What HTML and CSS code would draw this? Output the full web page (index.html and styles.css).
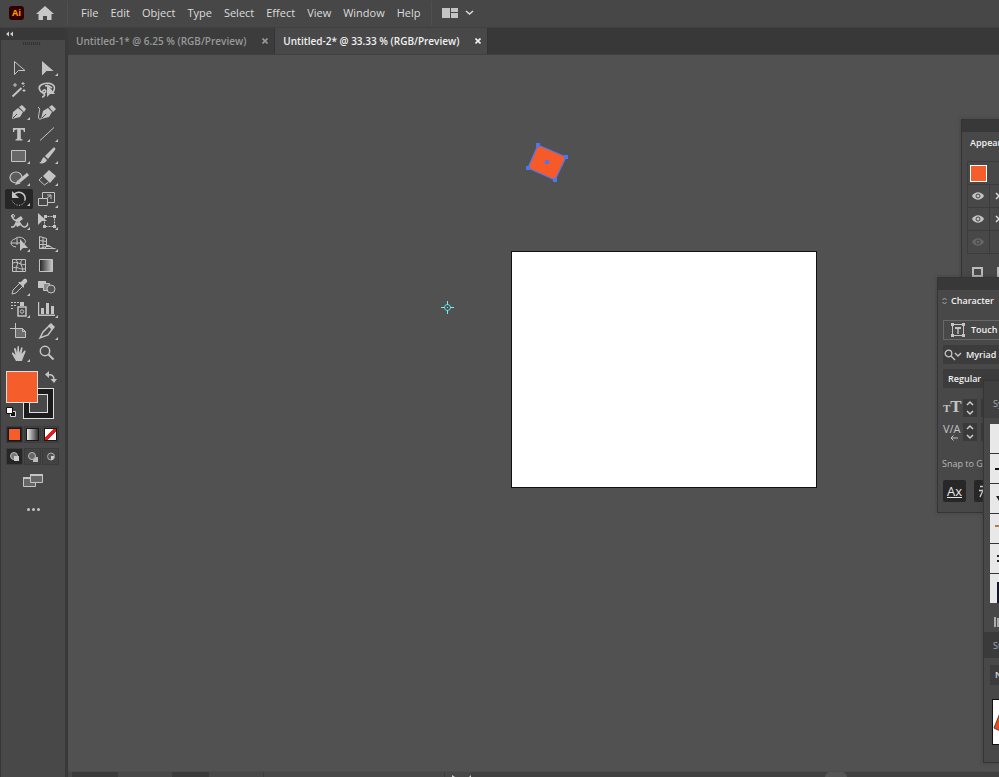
FILE: index.html
```html
<!DOCTYPE html>
<html lang="en">
<head>
<meta charset="utf-8">
<title>Untitled-2</title>
<link rel="stylesheet" href="styles.css">
</head>
<body>
<header class="menubar">
  <span class="logo">Ai</span>
  <button class="home" aria-label="Home"><svg width="18" height="16" viewBox="0 0 18 16"><path fill="#c8c8c8" d="M9 1 18 9h-2.500v6h-4.500v-4h-4v4H2.500V9H0z"/></svg></button>
  <nav class="menus">
    <button>File</button><button>Edit</button><button>Object</button><button>Type</button><button>Select</button><button>Effect</button><button>View</button><button>Window</button><button>Help</button>
  </nav>
  <button class="arrange" aria-label="Arrange documents"><svg width="32" height="12" viewBox="0 0 32 12"><path fill="#c4c4c4" d="M0 1h8v10H0zM9 1h7v4H9zM9 6h7v5H9z"/><path d="m24 4 3.500 3L31 4" fill="none" stroke="#ddd" stroke-width="1.500"/></svg></button>
</header>
<div class="body">
  <aside class="toolbar">
    <button class="collapse" aria-label="Collapse toolbar"><svg width="8" height="6" viewBox="0 0 8 6"><path fill="#ccc" d="M3 .5v5L0 3zM7 .5v5L4 3z"/></svg></button>
    <div class="grip"></div>
    <div class="tools">
      <button aria-label="Selection"><svg viewBox="0 0 28 22"><path class="l" d="M9.500 4.500v13l4-4h6.500z"/></svg></button>
      <button class="more" aria-label="Direct selection"><svg viewBox="0 0 28 22"><path class="f" d="M9 4v14.500l4.500-4.500h7z"/></svg></button>
      <button aria-label="Magic wand"><svg viewBox="0 0 28 22"><path class="l w" d="m7.500 17.500 9-8.500"/><path class="l" d="M18 8l1.500-1.500M10 4v4M8 6h4M18 3v3M16.500 4.500h3M19 10v3M17.500 11.500h3"/></svg></button>
      <button aria-label="Lasso"><svg viewBox="0 0 28 22"><path class="l" stroke-width="1.600" d="M10 14C6 12 5 8 8 6c4-3 11-2 13 1 1 2 0 5-1 6M10 14c4 0 3-4 1-3s-2 3 0 4-1 3-2 3M12 7c3-1 5 0 7 2"/><path class="f" d="M14 5v13l3-3h5z"/></svg></button>
      <button class="more" aria-label="Pen"><svg viewBox="0 0 28 22"><path class="f" d="m7 18 1-7 5-4 5 4-3 5zM14 6l3-2 4 4-2 3z"/><path class="d" d="m8 17 4-4"/></svg></button>
      <button aria-label="Curvature"><svg viewBox="0 0 28 22"><path class="f" d="m8 18 2-8 5-3 4 4-3 5zM16 6l3-2 4 4-3 3z"/><path class="d" d="m9 17 4-4"/><path class="l" d="M8 18c-4 1-2-4-2-6 1-3 1-5-1-6"/></svg></button>
      <button class="more" aria-label="Type"><svg viewBox="0 0 28 22"><path class="f" d="M8 5h12v4h-1.200c0-1.800-.5-2.500-3-2.500v8.500c0 1 .5 1.200 1.700 1.300V17.500h-7v-1.200c1.200-.1 1.700-.3 1.700-1.300V6.500c-2.500 0-3 .7-3 2.500H8z"/></svg></button>
      <button class="more" aria-label="Line segment"><svg viewBox="0 0 28 22"><path class="l" d="M7 17.500 21 4.500"/></svg></button>
      <button class="more" aria-label="Rectangle"><svg viewBox="0 0 28 22"><path d="M6.500 5.500h14v11h-14z" fill="#686868" stroke="#c4c4c4"/></svg></button>
      <button class="more" aria-label="Paintbrush"><svg viewBox="0 0 28 22"><path class="f" d="m12 11 8-8c2-1 3 0 2 2l-7 9zM11 12l3 3c-1 3-5 4-8 3 3-1 2-4 5-6z"/></svg></button>
      <button class="more" aria-label="Shaper"><svg viewBox="0 0 28 22"><ellipse cx="11" cy="10.500" rx="6" ry="5.500" fill="#5c5c5c" stroke="#c4c4c4" stroke-width="1.200"/><path class="l" stroke-width="3" d="m14 14.500 9-7.500"/><path class="f" d="m10 18 2.500-5 3 3.500z"/></svg></button>
      <button class="more" aria-label="Eraser"><svg viewBox="0 0 28 22"><path class="f" d="m10 9 6-6 7 6-6 7z"/><path class="l" d="m9 10-3 3 5.500 5 4-3"/></svg></button>
      <button class="more selected" aria-label="Rotate"><svg viewBox="0 0 28 22"><path class="l" stroke-width="1.500" d="M9 6c6-4 12 0 11 6"/><path class="f" d="M7 3v7h7z"/><path class="l" stroke-dasharray="1 1.500" d="M20 12c-1 7-11 7-13 0"/></svg></button>
      <button class="more" aria-label="Scale"><svg viewBox="0 0 28 22"><path class="l" d="M9.500 10V3.500h12v10H15M5.500 9.500h9v7h-9zM13 10l5-4m-4 0h4v4"/></svg></button>
      <button class="more" aria-label="Width"><svg viewBox="0 0 28 22"><path class="l" stroke-width="1.500" d="M6 16c5 1 4-4 6-6s4 7 8 6 2-4 3-4M7 4c0 3 1 5 5 6"/><circle class="l" cx="8" cy="5" r="1.500"/><path class="f" d="m10 9 6-4 2 3-4 3zM10 12l4-1 2 3-4 2z"/></svg></button>
      <button class="more" aria-label="Free transform"><svg viewBox="0 0 28 22"><path class="f" d="M5 2v12l4-4h5zM11 4h3v3h-3zM20 4h3v3h-3zM10 14h3v3h-3zM20 14h3v3h-3z"/><path class="l" stroke-dasharray="2 1" d="M11.500 5.500h10v10h-10z"/></svg></button>
      <button class="more" aria-label="Shape builder"><svg viewBox="0 0 28 22"><path class="l" d="M11 14c-7-1-6-7-1-8 2-3 8-2 10 1 1 2 0 3-1 4M12 5v7M6 10h10"/><path class="f" d="M15 6v12l3-3h5z"/></svg></button>
      <button class="more" aria-label="Perspective grid"><svg viewBox="0 0 28 22"><path class="l" d="M6.500 3.500v12h16M6.500 3.500l7 2v8l-7 2M10 5v10M6 7.500l8 1M6 11.500h8M14 13.500h4M11 16l4-4 6 4"/></svg></button>
      <button aria-label="Mesh"><svg viewBox="0 0 28 22"><path class="l" d="M7.500 4.500h13v12h-13zM7 9c5-5 9 3 14 0M7 14c4-5 9 3 14-1M11 5c4 4-2 8 1 12M17 5c-4 4 3 8 0 12"/></svg></button>
      <button aria-label="Gradient"><svg viewBox="0 0 28 22"><defs><linearGradient id="g"><stop stop-color="#222"/><stop offset="1" stop-color="#ccc"/></linearGradient></defs><path d="M6.500 4.500h13v12h-13z" fill="url(#g)" stroke="#c4c4c4"/></svg></button>
      <button class="more" aria-label="Eyedropper"><svg viewBox="0 0 28 22"><path class="l" d="m7 17 1-4 7-7 3 3-7 7z"/><path class="f" d="m13 5 3 0 3-3c2-1 4 1 3 3l-3 3v3z"/></svg></button>
      <button aria-label="Blend"><svg viewBox="0 0 28 22"><path class="f" d="M5 4h8v7H5z"/><path fill="#898989" stroke="#c4c4c4" d="M10.500 6.500h6v7h-6z"/><circle cx="18" cy="12" r="4" fill="#555" stroke="#c4c4c4"/></svg></button>
      <button class="more" aria-label="Symbol sprayer"><svg viewBox="0 0 28 22"><path class="l" stroke-width="1.500" d="M13 8h8v9h-8z"/><path class="f" d="M15 3h4v4h-4zM6 3h2v1H6zM9 3h2v1H9zM12 3h2v1h-2zM6 6h2v1H6zM9 6h2v1H9zM6 9h2v1H6z"/><circle class="l" cx="17" cy="12.500" r="1.700"/></svg></button>
      <button class="more" aria-label="Column graph"><svg viewBox="0 0 28 22"><path class="f" d="M5 3h1.200v12.500H22V17H5zM8 9h3v6H8zM13 4h3v11h-3zM18 7h3v8h-3z"/></svg></button>
      <button aria-label="Artboard"><svg viewBox="0 0 28 22"><path fill="#6d6d6d" stroke="#c4c4c4" d="M10.500 7.500h7l3 3v6h-10z"/><path class="l" d="M10.500 2v6M5 7.500h6M17.500 7.500v3h3"/></svg></button>
      <button class="more" aria-label="Slice"><svg viewBox="0 0 28 22"><path class="l" stroke-width="1.500" d="m7 17 3-6 7-7 3 3-5 7z"/><path class="f" d="m15 5 3-3 4 4-3 3z"/></svg></button>
      <button class="more" aria-label="Hand"><svg viewBox="0 0 28 22"><path class="f" d="M11 18 7 11c-.5-1.500 1-2 2-.5l1.500 1.500L9 6c0-1.500 1.500-1.500 2 0l1 4 .5-6c0-1.300 1.500-1.300 1.500 0v6l2-5c.5-1.200 2-.7 1.500.8L16.500 11l2.500-3c1-1 2-.3 1.500 1L18 15l-1 3z"/></svg></button>
      <button aria-label="Zoom"><svg viewBox="0 0 28 22"><circle class="l" stroke-width="1.500" cx="12" cy="8" r="4.700"/><path class="l w" d="m15.500 11.500 5 5"/></svg></button>
    </div>
    <div class="paint">
      <button class="stroke" aria-label="Stroke"></button>
      <button class="fill" aria-label="Fill"></button>
      <button class="swap" aria-label="Swap fill and stroke"><svg width="12" height="12" viewBox="0 0 12 12"><path d="M3 4c4-1 6 1 6 5" fill="none" stroke="#c4c4c4" stroke-width="1.500"/><path fill="#c4c4c4" d="M4 0v7L0 3.500zM5.500 8H12l-3 4z"/></svg></button>
      <button class="default" aria-label="Default fill and stroke"><svg width="11" height="11" viewBox="0 0 11 11"><path fill="#111" stroke="#ddd" d="M4.500 4.500h5v5h-5z"/><path fill="#fff" stroke="#111" d="M.5.5h6v6h-6z"/></svg></button>
    </div>
    <div class="strip">
      <button class="on" aria-label="Color"><i class="chip orange"></i></button>
      <button aria-label="Gradient fill"><i class="chip grad"></i></button>
      <button aria-label="None"><i class="chip none"></i></button>
    </div>
    <div class="strip">
      <button class="on" aria-label="Draw normal"><svg width="12" height="12" viewBox="0 0 12 12"><circle cx="5" cy="5" r="3.500" fill="#777" stroke="#bbb"/><path fill="#ccc" d="M5 5h5v5H5z"/></svg></button>
      <button aria-label="Draw behind"><svg width="12" height="12" viewBox="0 0 12 12"><path fill="#bbb" d="M6 6h5v5H6z"/><circle cx="5" cy="5" r="3.500" fill="#666" stroke="#bbb"/></svg></button>
      <button aria-label="Draw inside"><svg width="12" height="12" viewBox="0 0 12 12"><circle cx="6" cy="5.500" r="3.500" fill="#555" stroke="#aaa"/><path fill="#ccc" d="M6 5h3v2L7 9H6z"/></svg></button>
    </div>
    <button class="screen" aria-label="Screen mode"><svg width="20" height="15" viewBox="0 0 20 15"><path fill="#666" stroke="#c4c4c4" d="M.5 4.500h12v9H.5z"/><path stroke="#c4c4c4" stroke-width="2" d="M0 5h13"/><path fill="#666" stroke="#c4c4c4" d="M7.500 1.500h12v8h-12z"/><path stroke="#c4c4c4" stroke-width="2" d="M7 2h13"/></svg></button>
    <button class="dots" aria-label="Edit toolbar"><i></i><i></i><i></i></button>
  </aside>
  <main class="workspace">
    <div class="tabs">
      <div class="tab"><span>Untitled-1* @ 6.25 % (RGB/Preview)</span><button aria-label="Close Untitled-1"><svg width="6" height="6" viewBox="0 0 6 6"><path d="m.5.5 5 5m0-5-5 5" stroke="currentColor" stroke-width="1.600"/></svg></button></div>
      <div class="tab active"><span>Untitled-2* @ 33.33 % (RGB/Preview)</span><button aria-label="Close Untitled-2"><svg width="6" height="6" viewBox="0 0 6 6"><path d="m.5.5 5 5m0-5-5 5" stroke="currentColor" stroke-width="1.600"/></svg></button></div>
    </div>
    <div class="canvas">
      <div class="artboard"></div>
      <svg class="shape" width="44" height="42" viewBox="0 0 44 42"><path d="M12 3 40 15 29 38 2 26z" fill="#f55a28" stroke="#5577e8" stroke-width="1.300"/><path fill="#4d76f2" d="M10 1h4v4h-4zM38 13h4v4h-4zM27 36h4v4h-4zM0 24h4v4H0zM19 18h4v4h-4z"/></svg>
      <svg class="origin" width="13" height="13" viewBox="0 0 13 13"><circle cx="6.500" cy="6.500" r="3" fill="none" stroke="#5fdce0"/><path d="M6.500 0v4M6.500 9v4M0 6.500h4M9 6.500h4M6 6.500h1" stroke="#6ff0f2"/></svg>
    </div>
    <footer class="status">
      <span class="field zoom"></span><span class="gap"></span><span class="field nav"></span><span class="gap"></span>
      <span class="mode"></span>
      <svg width="26" height="5" viewBox="0 0 26 5"><path d="M7 3v2h3zM26 3l-2 2h2z" fill="#ccc"/></svg>
      <span class="track"><i class="thumb"></i></span>
    </footer>
  </main>
</div>

<section class="panel appearance">
  <div class="bar"></div>
  <h2>Appearance</h2>
  <div class="attr target"><i></i></div>
  <div class="attr"><svg width="12" height="8" viewBox="0 0 12 8"><path fill="#c4c4c4" d="M0 4c3-5 9-5 12 0-3 5-9 5-12 0z"/><circle cx="6" cy="4" r="2" fill="none" stroke="#444"/></svg><b><svg width="5" height="8" viewBox="0 0 5 8"><path d="m1 1 3 3-3 3" fill="none" stroke="#ddd" stroke-width="1.500"/></svg></b></div>
  <div class="attr"><svg width="12" height="8" viewBox="0 0 12 8"><path fill="#c4c4c4" d="M0 4c3-5 9-5 12 0-3 5-9 5-12 0z"/><circle cx="6" cy="4" r="2" fill="none" stroke="#444"/></svg><b><svg width="5" height="8" viewBox="0 0 5 8"><path d="m1 1 3 3-3 3" fill="none" stroke="#ddd" stroke-width="1.500"/></svg></b></div>
  <div class="attr"><svg width="12" height="8" viewBox="0 0 12 8"><path fill="#666" d="M0 4c3-5 9-5 12 0-3 5-9 5-12 0z"/><circle cx="6" cy="4" r="2" fill="none" stroke="#444"/></svg><b></b></div>
  <div class="actions"><i></i><i></i></div>
</section>

<section class="panel character">
  <div class="bar"></div>
  <h2><svg width="5" height="8" viewBox="0 0 5 8"><path d="m.5 3 2-2 2 2m0 2-2 2-2-2" fill="none" stroke="#aaa"/></svg>Character</h2>
  <div class="rows">
    <button class="touch"><svg width="16" height="16" viewBox="0 0 16 16"><path d="M2.500 2.500h11v11h-11z" fill="none" stroke="#c4c4c4"/><path fill="#c4c4c4" d="M1 1h3v3H1zM12 1h3v3h-3zM1 12h3v3H1zM12 12h3v3h-3zM5 5h6v2H8.700v5H7.300V7H5z"/></svg>Touch Type Tool</button>
    <button class="family"><svg width="18" height="12" viewBox="0 0 18 12"><circle cx="4.500" cy="4.500" r="3.300" fill="none" stroke="#c4c4c4" stroke-width="1.300"/><path d="m7 7 4 4M11 4l3 3 3-3" fill="none" stroke="#c4c4c4" stroke-width="1.400"/></svg>Myriad Pro</button>
    <button class="style">Regular</button>
    <div class="num"><span class="glyph serif"><small>T</small>T</span><button class="step" aria-label="Font size"><svg width="8" height="16" viewBox="0 0 8 16"><path d="m1 5 3-3 3 3M1 11l3 3 3-3" fill="none" stroke="#ccc" stroke-width="1.500"/></svg></button><span class="value"></span></div>
    <div class="num"><span class="glyph kern"><span>V/A</span><svg width="8" height="6" viewBox="0 0 8 6"><path d="M8 3H1m2.500-2.500L1 3l2.500 2.500" fill="none" stroke="#c4c4c4"/></svg></span><button class="step" aria-label="Kerning"><svg width="8" height="16" viewBox="0 0 8 16"><path d="m1 5 3-3 3 3M1 11l3 3 3-3" fill="none" stroke="#ccc" stroke-width="1.500"/></svg></button><span class="value"></span></div>
  </div>
  <p>Snap to Glyph</p>
  <div class="snaps"><button><u>Ax</u></button><button aria-label="Snap to x-height"><svg width="16" height="14" viewBox="0 0 16 14"><path d="M2 2.500h14M1 6.500h15M2 13 7 2" fill="none" stroke="#ddd" stroke-width="1.300"/></svg></button></div>
</section>

<section class="panel library">
  <div class="head">Symbols</div>
  <div class="brushes">
    <div></div>
    <div><svg width="9" height="29" viewBox="0 0 9 29"><path d="M5 15h4" stroke="#111" stroke-width="2"/></svg></div>
    <div><svg width="9" height="29" viewBox="0 0 9 29"><path d="M6 12l3 5v-5z" fill="#222"/></svg></div>
    <div><svg width="9" height="29" viewBox="0 0 9 29"><path d="M5 12h4" stroke="#b97b43" stroke-width="2"/></svg></div>
    <div><svg width="9" height="29" viewBox="0 0 9 29"><path d="M7 11h2v2H7zM7 16h2v2H7z" fill="#222"/></svg></div>
    <div><svg width="9" height="29" viewBox="0 0 9 29"><path d="M7 8h2v21H7z" fill="#15172e"/></svg></div>
  </div>
  <div class="books"><svg width="5" height="10" viewBox="0 0 5 10"><path d="M1 0v10M4 1v9" stroke="#ccc" stroke-width="1.500"/></svg></div>
  <div class="head second">Styles</div>
  <button class="normal">Normal</button>
  <div class="preview"><svg width="30" height="42" viewBox="0 0 30 42"><path d="M1 28 9 8 28 16v14H5z" fill="#e94e1f" stroke="#5b4036"/></svg></div>
</section>
</body>
</html>
```

FILE: styles.css
```css
* { box-sizing: border-box; }
body {
  margin: 0;
  height: 100vh;
  display: flex;
  flex-direction: column;
  position: relative;
  overflow: hidden;
  background: #515151;
  color: #dcdcdc;
  font: 11px/16px "Open Sans", "Noto Sans", sans-serif;
}
button {
  margin: 0;
  padding: 0;
  border: 0;
  background: none;
  color: inherit;
  font: inherit;
  white-space: nowrap;
  display: flex;
  align-items: center;
  justify-content: center;
}
svg { display: block; flex: none; }

.menubar {
  flex: none;
  height: 28px;
  display: flex;
  align-items: center;
  padding-bottom: 1px;
  background: #474747;
  border-bottom: 1px solid #404040;
}
.logo {
  width: 15px;
  height: 14px;
  margin-left: 9px;
  border-radius: 3px;
  background: #330000;
  color: #ff9a00;
  font-size: 9px;
  line-height: 13px;
  font-weight: 700;
  text-align: center;
}
.home { margin-left: 12px; }
.menus {
  display: flex;
  gap: 12px;
  height: 24px;
  margin-left: 13px;
  padding: 0 10px 0 13px;
  border-left: 1px solid #505050;
  border-right: 1px solid #505050;
}
.arrange { margin-left: 10px; }

.body { flex: 1; display: flex; min-height: 0; }
.toolbar {
  width: 68px;
  flex: none;
  display: flex;
  flex-direction: column;
  background: #484848;
  border-left: 1px solid #353535;
  border-right: 3px solid #393939;
}
.collapse {
  height: 12px;
  padding-left: 5px;
  justify-content: flex-start;
  background: #383838;
}
.grip {
  width: 18px;
  height: 3px;
  margin: 2px 0 12px 22px;
  background: repeating-linear-gradient(90deg, #333 0 1px, #454545 1px 2px);
}
.tools {
  display: grid;
  grid-template-columns: 28px 28px;
  grid-auto-rows: 22px;
  padding-left: 4px;
}
.tools button { position: relative; border-radius: 2px; }
.tools svg { width: 28px; height: 22px; }
.tools .selected { background: #262626; height: 20px; }
.more::after {
  content: "";
  position: absolute;
  right: 3px;
  bottom: 3px;
  border-left: 3px solid transparent;
  border-bottom: 3px solid #c4c4c4;
}
.l { fill: none; stroke: #c4c4c4; }
.w { stroke-width: 2; }
.f { fill: #c4c4c4; }
.d { stroke: #484848; fill: none; }

.paint { position: relative; height: 50px; margin: 6px 6px 0 5px; }
.paint button { position: absolute; }
.fill {
  left: 0;
  top: 0;
  width: 32px;
  height: 32px;
  background: #f55e2b;
  border: 1px solid #ddd;
}
.stroke {
  left: 17px;
  top: 17px;
  width: 31px;
  height: 31px;
  border: 1px solid #ddd;
  background: #1c1c1c;
}
.stroke::after {
  content: "";
  width: 17px;
  height: 17px;
  border: 1px solid #ddd;
  background: #484848;
}
.swap { right: 2px; top: 0; }
.default { left: 0; top: 36px; }
.strip { display: flex; gap: 1px; margin: 5px 0 0 5px; }
.strip button {
  width: 17px;
  height: 17px;
  background: #424242;
  border: 1px solid #3b3b3b;
}
.strip .on { background: #262626; }
.chip { width: 13px; height: 13px; border: 1px solid #181818; }
.orange { background: #f55e2b; }
.grad { background: linear-gradient(90deg, #eee, #333); }
.none { background: linear-gradient(-45deg, #fff 40%, #e21b1b 40% 60%, #fff 60%); background: linear-gradient(135deg, #fff 40%, #e21b1b 40% 60%, #fff 60%); }
.screen { margin-top: 8px; }
.dots { gap: 2px; margin-top: 20px; }
.dots i { width: 3px; height: 3px; border-radius: 50%; background: #c4c4c4; }

.workspace { flex: 1; min-width: 0; display: flex; flex-direction: column; }
.tabs {
  flex: none;
  height: 27px;
  display: flex;
  background: #383838;
  border-bottom: 1px solid #404040;
}
.tab {
  display: flex;
  align-items: center;
  gap: 16px;
  padding: 0 6px 0 8px;
  color: #999;
  font-weight: 600;
  font-size: 10px;
  background: #3c3c3c;
  border-right: 1px solid #343434;
}
.active { background: #484848; color: #f0f0f0; }
.canvas { flex: 1; position: relative; background: #515151; }
.artboard {
  position: absolute;
  left: 443px;
  top: 196px;
  width: 306px;
  height: 237px;
  background: #fff;
  border: 1px solid #111;
}
.shape { position: absolute; left: 458px; top: 87px; }
.origin { position: absolute; left: 373px; top: 246px; }
.status {
  flex: none;
  height: 6px;
  display: flex;
  padding-left: 4px;
  background: #484848;
  border-top: 1px solid #4c4c4c;
  overflow: hidden;
}
.field { background: #3a3a3a; }
.zoom { width: 46px; }
.nav { width: 37px; }
.gap { width: 54px; }
.mode { width: 182px; border-left: 1px solid #3d3d3d; border-right: 1px solid #3d3d3d; }
.track { flex: 1; background: #404040; }
.thumb {
  display: block;
  width: 22px;
  height: 10px;
  margin-left: 354px;
  border-radius: 5px;
  background: #555;
}

.panel {
  position: absolute;
  right: 0;
  background: #484848;
  border: 1px solid #353535;
  border-right: 0;
  box-shadow: 0 0 4px #3338;
  font-size: 9px;
  white-space: nowrap;
  overflow: hidden;
}
.bar { height: 12px; background: #383838; }
.panel h2 {
  display: flex;
  align-items: center;
  margin: 0;
  height: 22px;
  font-size: 9px;
  font-weight: 600;
  color: #f0f0f0;
}
.appearance { width: 38px; top: 119px; height: 200px; }
.appearance h2 { padding-left: 8px; }
.attr {
  display: flex;
  align-items: center;
  height: 23px;
  margin-left: 5px;
  padding-left: 4px;
  border: solid #3c3c3c;
  border-width: 0 0 1px 1px;
}
.target { height: 24px; margin-top: 7px; padding-left: 2px; border-top: 1px solid #3c3c3c; }
.target i { flex: none; width: 17px; height: 17px; background: #f55e2b; border: 1px solid #fff; }
.attr b {
  display: flex;
  align-items: center;
  height: 100%;
  margin-left: 5px;
  padding-left: 5px;
  border-left: 1px solid #3a3a3a;
}
.actions { display: flex; gap: 14px; margin: 13px 0 0 10px; }
.actions i { flex: none; width: 11px; height: 10px; border: 2px solid #bbb; }

.character { width: 62px; top: 277px; height: 236px; }
.character h2 { gap: 4px; padding-left: 4px; }
.rows { margin: 8px 0 0 5px; display: flex; flex-direction: column; gap: 5px; }
.rows > button {
  height: 19px;
  justify-content: flex-start;
  gap: 4px;
  background: #3c3c3c;
  font-weight: 600;
  color: #f0f0f0;
  overflow: hidden;
}
.rows > .touch { height: 20px; padding-left: 6px; gap: 5px; background: none; border: 1px solid #686868; border-right: 0; }
.rows > .family { padding-left: 1px; }
.rows > .style { padding-left: 5px; }
.num { display: flex; align-items: center; gap: 4px; height: 19px; }
.rows .style + .num { margin-top: 5px; }
.glyph { flex: none; width: 16px; color: #c4c4c4; }
.serif { font: 700 17px/18px "Liberation Serif", serif; }
.serif small { font-size: 11px; }
.kern { font-size: 11px; line-height: 12px; }
.kern svg { margin-left: 7px; }
.step { flex: none; width: 14px; height: 18px; background: #3a3a3a; }
.value { flex: 1; height: 18px; background: #3a3a3a; }
.character p { margin: 15px 0 8px 4px; color: #b8b8b8; }
.snaps { display: flex; gap: 8px; padding-left: 5px; }
.snaps button {
  flex: none;
  width: 23px;
  height: 22px;
  border-radius: 2px;
  background: #272727;
  color: #e8e8e8;
  font-size: 13px;
}

.library { width: 16px; top: 380px; height: 383px; }
.head { height: 37px; padding: 15px 0 0 9px; background: #404040; color: #aaa; }
.brushes { display: flex; flex-direction: column; gap: 1px; margin: 6px 0 0 6px; background: #333; }
.brushes div { height: 29px; background: #e8e8e8; }
.books { height: 29px; padding: 14px 0 0 10px; }
.second { height: 26px; padding-top: 6px; background: #3a3a3a; }
.normal {
  width: 100%;
  height: 20px;
  margin: 7px 0 0 6px;
  padding-left: 5px;
  justify-content: flex-start;
  background: #3c3c3c;
  font-weight: 600;
}
.preview { height: 46px; margin: 14px 0 0 8px; background: #fff; border: 1px solid #111; border-right: 0; }
```
